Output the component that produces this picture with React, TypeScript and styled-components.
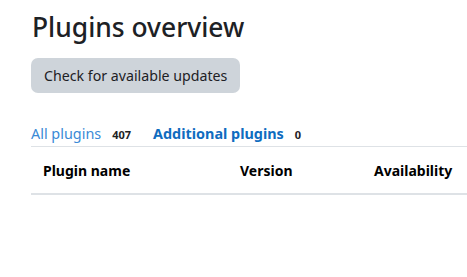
import React from 'react';
import styled, { createGlobalStyle } from 'styled-components';

const GlobalStyle = createGlobalStyle`
  body {
    margin: 0;
    background: #fff;
    font-family: 'Noto Sans', 'Open Sans', sans-serif;
    color: #1d2125;
  }
`;

const Page = styled.div`
  padding: 5px 0 0 31px;
  overflow: hidden;
`;

const Title = styled.h1`
  margin: 0 0 9px 1px;
  font-size: 26.4px;
  font-weight: 500;
  line-height: 44px;
  color: #1d2125;
`;

const Button = styled.button`
  height: 35px;
  padding: 0 13px;
  border: none;
  border-radius: 7px;
  background: #ced4da;
  color: #1d2125;
  font-family: inherit;
  font-size: 14.2px;
`;

const Tabs = styled.nav`
  display: flex;
  align-items: baseline;
  gap: 22px;
  margin-top: 31px;
  padding-bottom: 3px;
  border-bottom: 1px solid #dee2e6;
`;

const Tab = styled.a<{ active?: boolean }>`
  display: flex;
  align-items: baseline;
  gap: 11px;
  font-size: 14.4px;
  font-weight: ${(p) => (p.active ? 700 : 400)};
  color: ${(p) => (p.active ? '#0f6cbf' : '#3a8ad6')};
  text-decoration: none;
`;

const Count = styled.span`
  font-size: 11px;
  font-weight: 700;
  color: #1d2125;
`;

const Table = styled.table`
  width: 480px;
  border-collapse: collapse;
  font-size: 14px;
`;

const Th = styled.th<{ w?: number }>`
  width: ${(p) => (p.w ? `${p.w}px` : 'auto')};
  padding: 14px 12px 13px;
  text-align: left;
  font-weight: 700;
  color: #000;
  border-bottom: 2px solid #dee2e6;
  white-space: nowrap;
`;

export default function App() {
  return (
    <Page>
      <GlobalStyle />
      <Title>Plugins overview</Title>
      <Button>Check for available updates</Button>
      <Tabs>
        <Tab href="#">
          All plugins <Count>407</Count>
        </Tab>
        <Tab href="#" active>
          Additional plugins <Count>0</Count>
        </Tab>
      </Tabs>
      <Table>
        <thead>
          <tr>
            <Th w={173}>Plugin name</Th>
            <Th w={110}>Version</Th>
            <Th>Availability</Th>
          </tr>
        </thead>
      </Table>
    </Page>
  );
}
